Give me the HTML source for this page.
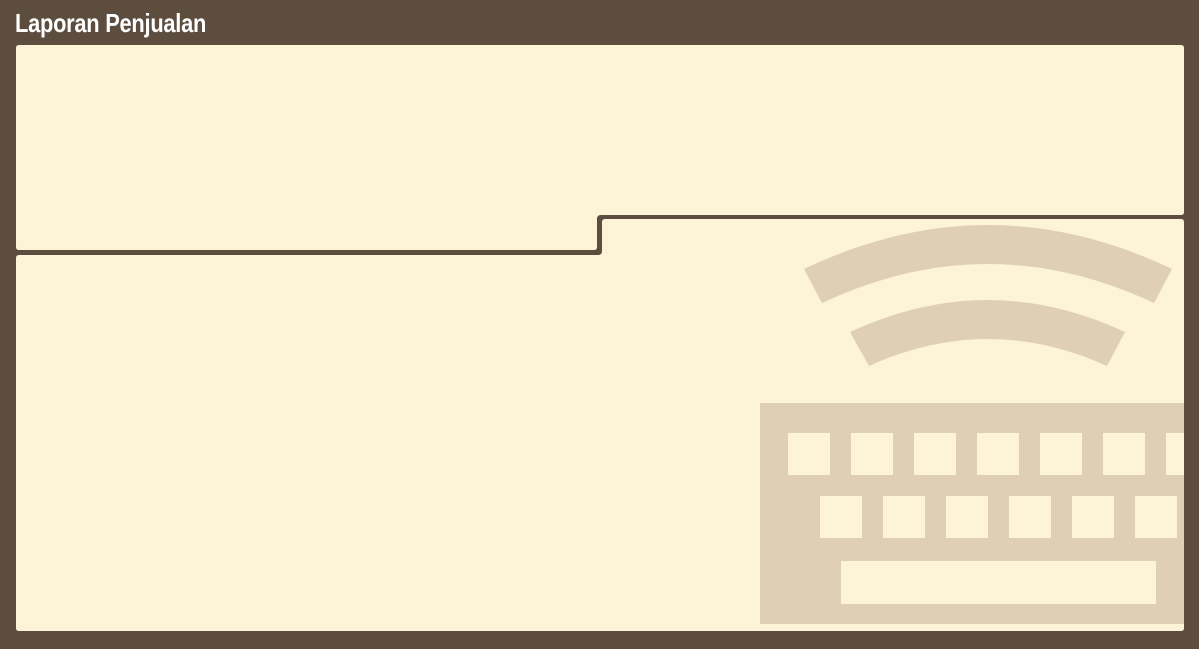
<!DOCTYPE html>
<html><head><meta charset="utf-8"><style>
html,body{margin:0;padding:0;background:#5c4d3f;width:1199px;height:649px;overflow:hidden}
.t{position:absolute;left:15px;top:8px;color:#fff;font-family:"Liberation Sans Narrow","Liberation Sans",sans-serif;font-weight:bold;font-size:26px;letter-spacing:-0.3px;transform:scaleX(0.84);transform-origin:left}
svg{position:absolute;left:0;top:0}
</style></head><body>
<svg width="1199" height="649" viewBox="0 0 1199 649">
<path d="M19 45 H1181 Q1184 45 1184 48 V212 Q1184 215 1181 215 H601 Q597 215 597 219 V247 Q597 250 594 250 H19 Q16 250 16 247 V48 Q16 45 19 45 Z" fill="#fdf3d7"/>
<path d="M19 255 H598 Q602 255 602 251 V222 Q602 219 605 219 H1181 Q1184 219 1184 222 V628 Q1184 631 1181 631 H19 Q16 631 16 628 V258 Q16 255 19 255 Z" fill="#fdf3d7"/>
<g fill="#dfd0b4">
<path d="M804 269 Q988 181 1172 269 L1154 303 Q988 225 822 303 Z"/>
<path d="M850 332 Q988 268 1125 332 L1107 366 Q988 312 869 366 Z"/>
<path fill-rule="evenodd" d="M760 403 H1184 V624 H760 Z
M788 433 h42 v42 h-42 Z M851 433 h42 v42 h-42 Z M914 433 h42 v42 h-42 Z M977 433 h42 v42 h-42 Z M1040 433 h42 v42 h-42 Z M1103 433 h42 v42 h-42 Z M1166 433 h18 v42 h-18 Z
M820 496 h42 v42 h-42 Z M883 496 h42 v42 h-42 Z M946 496 h42 v42 h-42 Z M1009 496 h42 v42 h-42 Z M1072 496 h42 v42 h-42 Z M1135 496 h42 v42 h-42 Z
M841 561 h315 v43 h-315 Z"/>
</g>
</svg>
<div class="t">Laporan Penjualan</div>
</body></html>
